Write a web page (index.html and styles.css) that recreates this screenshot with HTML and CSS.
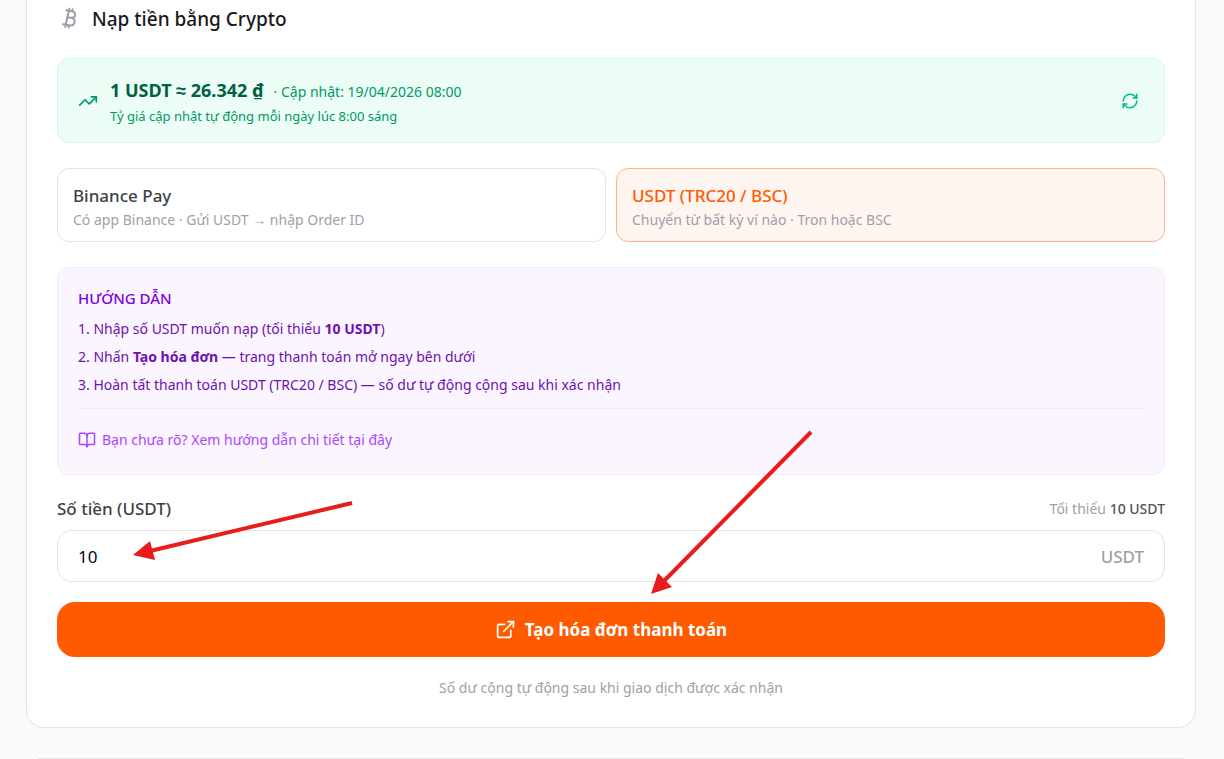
FILE: index.html
```html
<!DOCTYPE html>
<html lang="vi">
<head>
    <meta charset="UTF-8">
    <meta name="viewport" content="width=device-width, initial-scale=1.0">
    <title>Nạp tiền bằng Crypto</title>
    <link rel="stylesheet" href="styles.css">
</head>
<body>
    <main class="page">
        <section class="card">
            <h2 class="card-title">
                <svg class="icon" width="24" height="24" viewBox="0 0 24 24"><path d="M9.300 3.300 14.800 4.300C19.800 5.200 19 11.200 14 10.800L10.300 10.200M14 10.800C19.500 11.800 18.500 18.600 13 18.400L5.900 17.200M11.800 3.800 8.700 17.700M12.400 1.600 11.900 3.600M15.700 2.200 15.200 4.200M8.700 17.900 8.300 20M12 18.400 11.600 20.600"/></svg>
                Nạp tiền bằng Crypto
            </h2>

            <div class="rate">
                <svg class="icon" width="20" height="20" viewBox="0 0 24 24"><path d="M16 7h6v6"/><path d="m22 7-8.5 8.5-5-5L2 17"/></svg>
                <div class="rate-text">
                    <p class="rate-value"><strong>1 USDT ≈ 26.342 ₫</strong><span>· Cập nhật: 19/04/2026 08:00</span></p>
                    <p class="rate-note">Tỷ giá cập nhật tự động mỗi ngày lúc 8:00 sáng</p>
                </div>
                <button type="button" class="refresh" aria-label="Làm mới tỷ giá">
                    <svg class="icon" width="18" height="18" viewBox="0 0 24 24"><path d="M3 12a9 9 0 0 1 9-9 9.75 9.75 0 0 1 6.74 2.74L21 8"/><path d="M21 3v5h-5"/><path d="M21 12a9 9 0 0 1-9 9 9.75 9.75 0 0 1-6.74-2.74L3 16"/><path d="M8 16H3v5"/></svg>
                </button>
            </div>

            <div class="methods">
                <button type="button" class="method">
                    <span class="method-name">Binance Pay</span>
                    <span class="method-desc">Có app Binance · Gửi USDT → nhập Order ID</span>
                </button>
                <button type="button" class="method active">
                    <span class="method-name">USDT (TRC20 / BSC)</span>
                    <span class="method-desc">Chuyển từ bất kỳ ví nào · Tron hoặc BSC</span>
                </button>
            </div>

            <div class="guide">
                <h3>HƯỚNG DẪN</h3>
                <ol>
                    <li>Nhập số USDT muốn nạp (tối thiểu <strong>10 USDT</strong>)</li>
                    <li>Nhấn <strong>Tạo hóa đơn</strong> — trang thanh toán mở ngay bên dưới</li>
                    <li>Hoàn tất thanh toán USDT (TRC20 / BSC) — số dư tự động cộng sau khi xác nhận</li>
                </ol>
                <div class="guide-more">
                    <a href="#">
                        <svg class="icon" width="18" height="18" viewBox="0 0 24 24"><path d="M12 7v14"/><path d="M3 18a1 1 0 0 1-1-1V4a1 1 0 0 1 1-1h5a4 4 0 0 1 4 4 4 4 0 0 1 4-4h5a1 1 0 0 1 1 1v13a1 1 0 0 1-1 1h-6a3 3 0 0 0-3 3 3 3 0 0 0-3-3z"/></svg>
                        Bạn chưa rõ? Xem hướng dẫn chi tiết tại đây
                    </a>
                </div>
            </div>

            <form class="deposit">
                <div class="field-head">
                    <label for="amount">Số tiền (USDT)</label>
                    <span class="minimum">Tối thiểu <strong>10 USDT</strong></span>
                </div>
                <div class="field">
                    <input type="text" inputmode="decimal" id="amount" name="amount" value="10">
                    <span class="unit">USDT</span>
                </div>
                <button type="submit" class="submit">
                    <svg class="icon" width="21" height="21" viewBox="0 0 24 24"><path d="M15 3h6v6"/><path d="M10 14 21 3"/><path d="M18 13v6a2 2 0 0 1-2 2H5a2 2 0 0 1-2-2V8a2 2 0 0 1 2-2h6"/></svg>
                    Tạo hóa đơn thanh toán
                </button>
                <p class="hint">Số dư cộng tự động sau khi giao dịch được xác nhận</p>
            </form>
        </section>

        <section class="next-card"></section>
    </main>

    <!-- pointers to the amount and the submit button -->
    <svg class="arrows" width="1224" height="759" viewBox="0 0 1224 759" aria-hidden="true">
        <path class="shaft" d="M352 503 150 551"/>
        <path class="head" d="M133 555 150 541 155 560z"/>
        <path class="shaft" d="M811 432 663 582"/>
        <path class="head" d="M651 594 658 573 672 587z"/>
    </svg>
</body>
</html>
```
FILE: styles.css
```css
* {
    box-sizing: border-box;
    margin: 0;
    padding: 0;
}
body {
    position: relative;
    background: #fafafa;
    color: #18181b;
    font-family: "Segoe UI", "Noto Sans", sans-serif;
    font-size: 14px;
}
button, input {
    font: inherit;
    color: inherit;
}
button {
    cursor: pointer;
}
.icon {
    flex: none;
    fill: none;
    stroke: currentColor;
    stroke-width: 2;
    stroke-linecap: round;
    stroke-linejoin: round;
}
.page {
    padding: 0 28px 0 26px;
}
.card {
    padding: 5px 30px 28px;
    background: #fff;
    border: 1px solid #e4e4e7;
    border-top: 0;
    border-radius: 0 0 18px 18px;
}
.next-card {
    margin: 30px 12px 0;
    border-top: 1px solid #e4e4e7;
}
.card-title {
    display: flex;
    align-items: center;
    gap: 11px;
    font-size: 19px;
    line-height: 28px;
    font-weight: 500;
    margin-bottom: 25px;
}
.card-title .icon {
    color: #9f9fa9;
}

.rate {
    display: flex;
    align-items: center;
    gap: 12px;
    padding: 15px 20px;
    margin-bottom: 25px;
    background: #ecfdf5;
    border: 1px solid #d0fae5;
    border-radius: 12px;
    color: #009966;
}
.rate-text {
    flex: 1;
    padding-top: 4px;
}
.rate-value {
    line-height: 28px;
}
.rate-value strong {
    margin-right: 10px;
    font-size: 18px;
    line-height: 24px;
    font-weight: 700;
    color: #006045;
}
.rate-note {
    font-size: 13px;
    line-height: 21px;
}
.refresh {
    display: flex;
    padding: 5px;
    border: 0;
    background: none;
    color: #00bc7d;
}

.methods {
    display: grid;
    grid-template-columns: 1fr 1fr;
    gap: 10px;
    margin-bottom: 25px;
}
.method {
    padding: 15px 15px 10px;
    background: #fff;
    border: 1px solid #e4e4e7;
    border-radius: 12px;
    text-align: left;
}
.method span {
    display: block;
}
.method-name {
    font-size: 17px;
    line-height: 24px;
    font-weight: 500;
    color: #3f3f46;
}
.method-desc {
    line-height: 23px;
    color: #9f9fa9;
}
.method.active {
    background: #fff5f0;
    border-color: #ffb58a;
}
.method.active .method-name {
    color: #ff5a00;
}

.guide {
    padding: 20px;
    margin-bottom: 25px;
    background: #faf5ff;
    border: 1px solid #f3e8ff;
    border-radius: 12px;
    color: #6e11b0;
}
.guide h3 {
    margin-bottom: 7px;
    font-size: 15px;
    line-height: 20px;
    font-weight: 500;
    color: #8200db;
}
.guide ol {
    list-style: none;
    counter-reset: step;
}
.guide li {
    line-height: 28px;
    counter-increment: step;
}
.guide li::before {
    content: counter(step) ". ";
}
.guide-more {
    margin-top: 9px;
    padding: 20px 0 4px;
    border-top: 1px solid #f3e8ff;
}
.guide-more a {
    display: inline-flex;
    align-items: center;
    gap: 6px;
    line-height: 21px;
    color: #ad46ff;
    text-decoration: none;
    vertical-align: top;
}

.field-head {
    display: flex;
    justify-content: space-between;
    line-height: 18px;
    margin-bottom: 12px;
}
.field-head label {
    font-size: 17px;
    font-weight: 500;
    color: #3f3f46;
}
.minimum {
    color: #9f9fa9;
}
.minimum strong {
    font-weight: 500;
    color: #52525c;
}
.field {
    display: flex;
    align-items: center;
    height: 52px;
    padding: 0 20px;
    border: 1px solid #e4e4e7;
    border-radius: 14px;
    font-size: 17px;
}
.field input {
    flex: 1;
    min-width: 0;
    border: 0;
    outline: 0;
    background: none;
    color: #09090b;
}
.unit {
    font-weight: 500;
    color: #9f9fa9;
}
.submit {
    display: flex;
    align-items: center;
    justify-content: center;
    gap: 9px;
    width: 100%;
    height: 55px;
    margin: 20px 0;
    border: 0;
    border-radius: 18px;
    background: #ff5a00;
    color: #fff;
    font-size: 17px;
    font-weight: 700;
}
.hint {
    line-height: 22px;
    text-align: center;
    color: #9f9fa9;
}

.arrows {
    position: absolute;
    top: 0;
    left: 0;
    pointer-events: none;
}
.shaft {
    fill: none;
    stroke: #e81c1c;
    stroke-width: 4;
}
.head {
    fill: #e81c1c;
}
```
